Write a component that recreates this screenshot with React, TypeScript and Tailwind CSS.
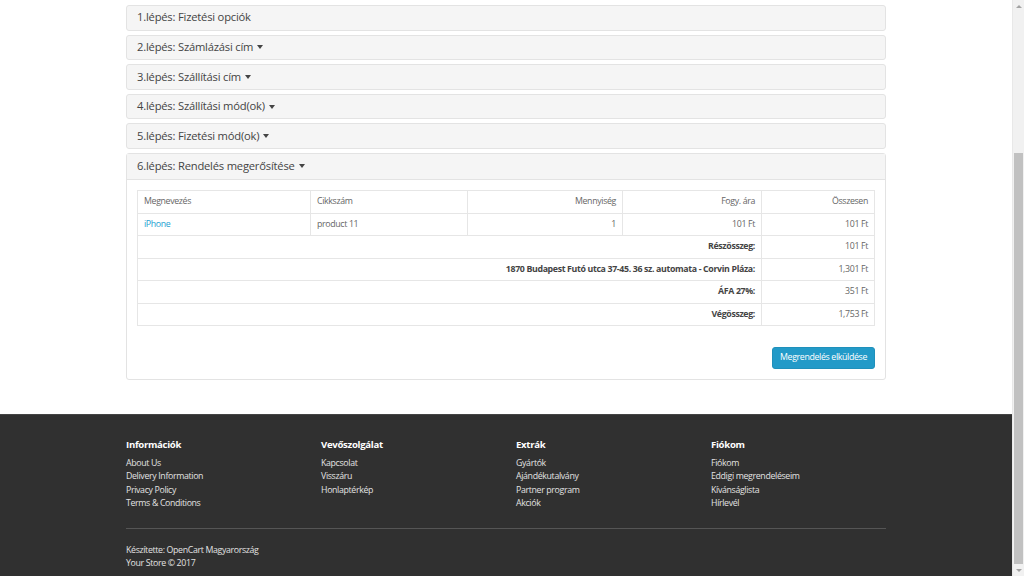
const steps = [
  { label: "1.lépés: Fizetési opciók", caret: false },
  { label: "2.lépés: Számlázási cím", caret: true },
  { label: "3.lépés: Szállítási cím", caret: true },
  { label: "4.lépés: Szállítási mód(ok)", caret: true },
  { label: "5.lépés: Fizetési mód(ok)", caret: true },
];

const totals = [
  { title: "Részösszeg:", value: "101 Ft" },
  { title: "1870 Budapest Futó utca 37-45. 36 sz. automata - Corvin Pláza:", value: "1,301 Ft" },
  { title: "ÁFA 27%:", value: "351 Ft" },
  { title: "Végösszeg:", value: "1,753 Ft" },
];

const footerCols = [
  { title: "Információk", links: ["About Us", "Delivery Information", "Privacy Policy", "Terms & Conditions"] },
  { title: "Vevőszolgálat", links: ["Kapcsolat", "Visszáru", "Honlaptérkép"] },
  { title: "Extrák", links: ["Gyártók", "Ajándékutalvány", "Partner program", "Akciók"] },
  { title: "Fiókom", links: ["Fiókom", "Eddigi megrendeléseim", "Kívánságlista", "Hírlevél"] },
];

function Caret() {
  return (
    <span className="inline-block w-0 h-0 ml-[4px] align-middle border-x-[3.5px] border-x-transparent border-t-[4px] border-t-[#444]" />
  );
}

export default function App() {
  return (
    <div className="flex w-[1024px] h-[576px] overflow-hidden bg-white font-['Open_Sans',sans-serif]">
      <div className="flex flex-col w-[1012px]">
        {/* checkout accordion */}
        <div className="w-[760px] mx-auto pt-[5px] flex flex-col gap-[4px]">
          {steps.map((s) => (
            <div key={s.label}
              className="h-[25.6px] flex items-center px-[10px] bg-[#f5f5f5] border border-[#e3e3e3] rounded-[3px] text-[11.2px] tracking-[-0.2px] text-[#444]">
              {s.label}
              {s.caret && <Caret />}
            </div>
          ))}

          <div className="border border-[#e3e3e3] rounded-[3px] bg-white">
            <div className="h-[25.6px] flex items-center px-[10px] bg-[#f5f5f5] border-b border-[#e3e3e3] text-[11.2px] tracking-[-0.2px] text-[#444]">
              6.lépés: Rendelés megerősítése
              <Caret />
            </div>
            <div className="px-[10px] pt-[10.5px] pb-[10px]">
              <table className="w-full border-collapse text-[8.8px] tracking-[-0.35px] text-[#666]">
                <thead>
                  <tr className="h-[22.5px]">
                    <td className="w-[173px] border border-[#e6e6e6] px-[6px]">Megnevezés</td>
                    <td className="w-[157px] border border-[#e6e6e6] px-[6px]">Cikkszám</td>
                    <td className="w-[155px] border border-[#e6e6e6] px-[6px] text-right">Mennyiség</td>
                    <td className="w-[139px] border border-[#e6e6e6] px-[6px] text-right">Fogy. ára</td>
                    <td className="border border-[#e6e6e6] px-[6px] text-right">Összesen</td>
                  </tr>
                </thead>
                <tbody>
                  <tr className="h-[22.5px]">
                    <td className="border border-[#e6e6e6] px-[6px] text-[#23a1d1]">iPhone</td>
                    <td className="border border-[#e6e6e6] px-[6px]">product 11</td>
                    <td className="border border-[#e6e6e6] px-[6px] text-right">1</td>
                    <td className="border border-[#e6e6e6] px-[6px] text-right">101 Ft</td>
                    <td className="border border-[#e6e6e6] px-[6px] text-right">101 Ft</td>
                  </tr>
                  {totals.map((t) => (
                    <tr key={t.title} className="h-[22.5px]">
                      <td colSpan={4} className="border border-[#e6e6e6] px-[6px] text-right font-bold text-[#444]">{t.title}</td>
                      <td className="border border-[#e6e6e6] px-[6px] text-right">{t.value}</td>
                    </tr>
                  ))}
                </tbody>
              </table>
              <div className="flex justify-end mt-[21px]">
                <button className="h-[22px] w-[103px] rounded-[3px] bg-[#229ac8] border border-[#1f90bb] text-white text-[8.8px] tracking-[-0.35px]">
                  Megrendelés elküldése
                </button>
              </div>
            </div>
          </div>
        </div>

        {/* footer */}
        <footer className="mt-[34px] flex-1 bg-[#303030] border-t border-[#444]">
          <div className="w-[760px] mx-auto pt-[23px]">
            <div className="grid grid-cols-[repeat(4,195px)]">
              {footerCols.map((c) => (
                <div key={c.title}>
                  <h5 className="text-[9.6px] tracking-[-0.3px] leading-[14px] font-bold text-white">{c.title}</h5>
                  <ul className="mt-[5px] text-[8.8px] tracking-[-0.35px] leading-[13.4px] text-[#e2e2e2]">
                    {c.links.map((l) => (
                      <li key={l}>{l}</li>
                    ))}
                  </ul>
                </div>
              ))}
            </div>
            <div className="mt-[17px] border-t border-[#555]" />
            <div className="mt-[15px] text-[8.8px] tracking-[-0.35px] leading-[13.4px] text-[#e2e2e2]">
              <p>Készítette: <span className="text-[#e2e2e2]">OpenCart Magyarország</span></p>
              <p>Your Store © 2017</p>
            </div>
          </div>
        </footer>
      </div>

      {/* scrollbar */}
      <div className="w-[12px] flex flex-col bg-[#f1f1f1] border-l border-[#e8e8e8]">
        <div className="h-[12px] flex items-center justify-center">
          <span className="w-0 h-0 border-x-[3px] border-x-transparent border-b-[3px] border-b-[#a3a3a3]" />
        </div>
        <div className="h-[141px]" />
        <div className="flex-1 mx-[1px] bg-[#c1c1c1]" />
        <div className="h-[12px] flex items-center justify-center">
          <span className="w-0 h-0 border-x-[3px] border-x-transparent border-t-[3px] border-t-[#a3a3a3]" />
        </div>
      </div>
    </div>
  );
}
